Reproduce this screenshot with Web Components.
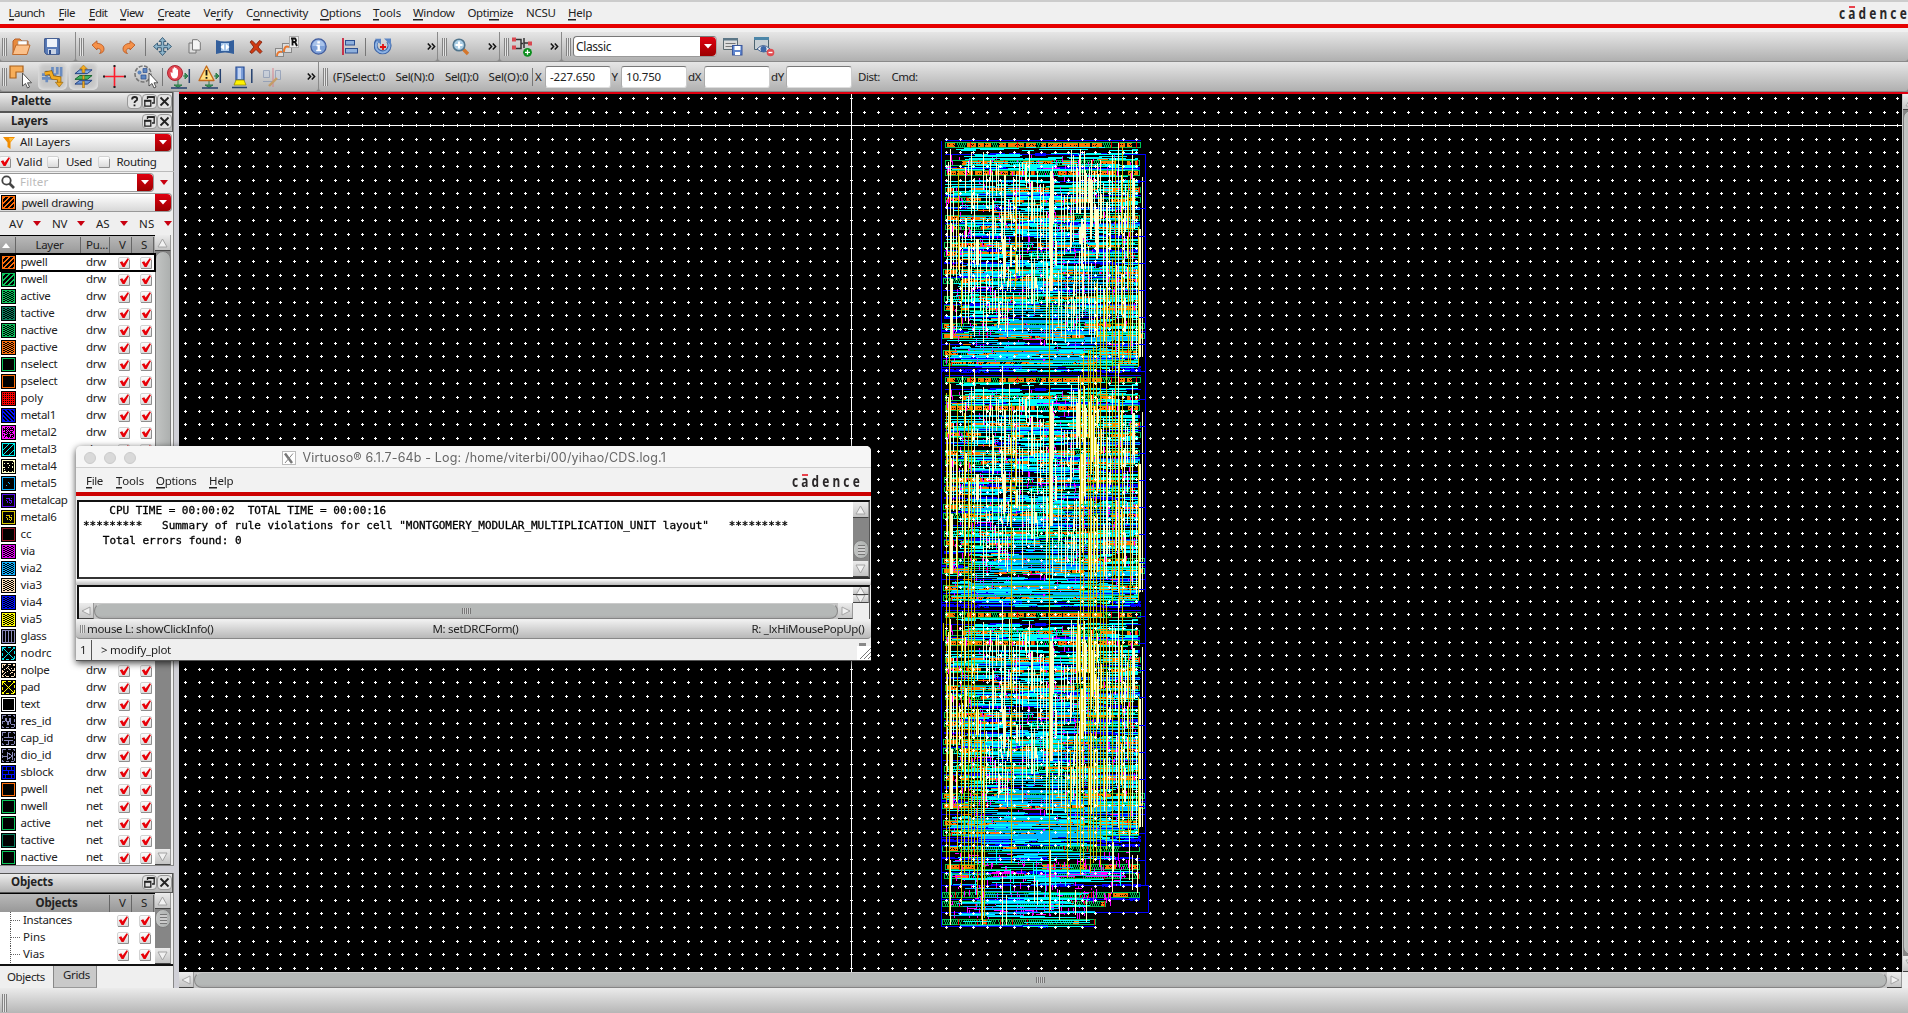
<!DOCTYPE html>
<html lang="en">
<head>
<meta charset="utf-8">
<title>Virtuoso Layout</title>
<style>
html,body{margin:0;padding:0;height:100%;overflow:hidden;background:#efefef}
body{font-family:"Noto Sans","Open Sans",sans-serif;font-size:11.5px;color:#222}
</style>
</head>
<body>
<app-shell></app-shell>
<script>
const define = (name, css, html, after) => customElements.define(name, class extends HTMLElement {
  connectedCallback() {
    if (this.shadowRoot) return;
    const r = this.attachShadow({mode: 'open'});
    r.innerHTML = `<style>*{box-sizing:border-box}${css}</style>` + (typeof html === 'function' ? html(this) : html);
    if (after) after(this, r);
  }
});

/* Text set to a given advance width; "_" before a letter marks its mnemonic. */
define('fit-text', `:host{display:block;flex:none;white-space:pre;line-height:16px;height:16px}
span{display:inline-block;white-space:pre}u{text-decoration:none;box-shadow:0 1.5px 0 #222;display:inline-block;line-height:13px}`,
  el => {
    const t = el.getAttribute('text');
    return `<span>${el.hasAttribute('mn') ? t.replace(/_(.)/, '<u>$1</u>') : t}</span>`;
  },
  (el, r) => {
    const s = r.querySelector('span'), w = +el.getAttribute('w');
    if (!w) return;
    el.style.width = w + 'px';
    const n = s.textContent.length, cur = s.getBoundingClientRect().width;
    s.style.letterSpacing = ((w - cur) / n).toFixed(3) + 'px';
  });
const T = (text, w, extra = '') => `<fit-text text='${text}' w="${w}" ${extra}></fit-text>`;

/* Children in a flex row, each spaced from the one before it. */
const row = (start, items) => {
  let cur = start;
  return items.map(([x, w, h]) => {
    const m = x - cur; cur = x + w;
    return `<div style="margin-left:${m}px;width:${w}px;flex:none;display:flex;align-items:center">${h}</div>`;
  }).join('');
};

define('cadence-logo', `:host{display:block;flex:none;width:72px;height:20px;color:#2b2829;position:relative;overflow:visible}
.t{transform:scaleX(.74);transform-origin:0 0;font:bold 16px/20px "Noto Sans",sans-serif;letter-spacing:4.3px;white-space:nowrap}
i{position:absolute;left:10px;top:3px;width:6px;height:2px;background:#e8414b}`,
  `<div class="t">cadence</div><i></i>`);

define('check-box', `:host{display:block;flex:none;width:12px;height:12px}svg{display:block;overflow:visible}`,
  el => `<svg width="12" height="12"><defs><linearGradient id="g" x2="0" y2="1"><stop stop-color="#fff"/><stop offset="1" stop-color="#d9d9d9"/></linearGradient></defs>
  <rect x=".5" y=".5" width="11" height="11" rx="1.5" fill="url(#g)" stroke="#d2d2d2"/><path d="M1 11.5h10.5V3" fill="none" stroke="#8e8e8e"/>
  ${el.hasAttribute('on') ? '<path d="M1.800 5.200L4.300 4.300L5.600 6.400L9.600 1.300L11 2L6.600 10H4.600z" fill="#e80008"/>' : ''}</svg>`);

define('drop-button', `:host{display:flex;flex:none;align-items:center;justify-content:center;background:linear-gradient(#e00010,#9c0000);border-radius:0 4px 4px 0}`,
  `<svg width="8" height="5"><path d="M0 0h8L4 4.5z" fill="#fff"/></svg>`);

define('scroll-button', `:host{display:flex;flex:none;align-items:center;justify-content:center;width:15px;height:16px;background:linear-gradient(#ececec,#c4c4c4);border-bottom:1px solid #444;border-right:1px solid #999}`,
  el => {
    const d = {up: 'M5.5 1L10 9H1z', down: 'M1 1H10L5.5 9z', left: 'M1 5L9 1V9z', right: 'M2 1L10 5L2 9z'}[el.getAttribute('dir')];
    return `<svg width="11" height="10"><path d="${d}" fill="#f1f1f1" stroke="#a4a4a4"/></svg>`;
  });

/* ---- icons ---- */
const I = {
open:['0 0 20 18','<path d="M2 16V3l2-2h5l2 2h6v4" fill="#e88a3c" stroke="#b5602a"/><path d="M7 3h9v6H7z" fill="#fff" stroke="#999" stroke-width=".6"/><path d="M1.5 16.5L5 7h14l-3 9.500z" fill="#fbc08a" stroke="#c06c2c"/>'],
save:['0 0 16 17','<path d="M.7.7h14.600v15.600H2.500L.7 14.500z" fill="#5a7cb8" stroke="#2d4a86"/><path d="M3 1h10v8H3z" fill="#eef3fa"/><path d="M4 11h8v5H4z" fill="#c9d3e4"/><path d="M5 12h2v4H5z" fill="#2d4a86"/>'],
undo:['0 0 14 14','<path d="M1 5L6 .8V3.300c5 .3 7 3 7 5.700 0 2.300-1.500 4-4.500 4.500 2-1.500 2.300-5-2.500-5.200V10z" fill="#f5914a" stroke="#b5531c" stroke-width=".8"/>'],
redo:['0 0 14 14','<g transform="matrix(-1 0 0 1 14 0)"><path d="M1 5L6 .8V3.300c5 .3 7 3 7 5.700 0 2.300-1.500 4-4.500 4.500 2-1.500 2.300-5-2.500-5.200V10z" fill="#f5914a" stroke="#b5531c" stroke-width=".8"/></g>'],
move:['0 0 19 19','<path d="M9.500.5L13 4.500H10.700V8.300H14.500V6L18.500 9.500L14.500 13V10.700H10.700V14.500H13L9.500 18.500L6 14.500H8.300V10.700H4.500V13L.5 9.500L4.500 6V8.300H8.300V4.500H6z" fill="#8fb6cc" stroke="#2f5570" stroke-width=".9"/>'],
copy:['0 0 13 15','<path d="M1 4h7v10H1z" fill="#ddd" stroke="#777"/><path d="M4.500.7h5L12.300 3.500V11H4.500z" fill="#f4f4f4" stroke="#777"/>'],
stretch:['0 0 18 14','<path d="M0 0Q9 3 18 0V14Q9 11 0 14z" fill="#335f9c"/><rect x="5" y="3" width="8" height="8" fill="#a9c8ea"/><path d="M8 4v6L4.500 7zM10 4v6l3.500-3z" fill="#fff"/>'],
del:['0 0 14 14','<path d="M1 2l2-1.500L7 4.500 10.500 .5 13 2 9 7l4 4.500-2 2L7 9.500 3 13.500.8 12 4.800 7z" fill="#cf3a12" stroke="#7a1b05" stroke-width=".8"/>'],
rep:['0 0 24 24','<rect x=".5" y="13.500" width="8" height="8" fill="#ddd" stroke="#888"/><rect x="7.500" y="8.500" width="9" height="9" fill="#ddd" stroke="#888"/><rect x="14.500" y="1.500" width="9" height="11" fill="#eee" stroke="#aaa"/><path d="M2 21q0-5 5-4M9 17q0-7 5-5" stroke="#e87830" stroke-width="2" fill="none"/><path d="M16 3.500h4q2 2 0 3.500l2 4M17.500 3.500v7M17 7h3" stroke="#111" stroke-width="1.800" fill="none"/>'],
info:['0 0 17 17','<circle cx="8.500" cy="8.500" r="7.600" fill="#7da0d8" stroke="#3d599c" stroke-width="1.200"/><path d="M2.500 8a6 6 0 0 1 12 0z" fill="#a9c3ea"/><path d="M7.300 3.200h2.600v2.200H7.300zM6.500 6.800h3.400v5h1.300v1.400H6.200v-1.400h1.300V8.200h-1z" fill="#fff"/>'],
align:['0 0 16 17','<path d="M1 0v17" stroke="#c8102c" stroke-width="1.600"/><rect x="3.500" y="2.500" width="9" height="4.500" fill="#8fb0dc" stroke="#2d4f90"/><rect x="3.500" y="10.500" width="12" height="4.500" fill="#8fb0dc" stroke="#2d4f90"/>'],
rot:['0 0 18 18','<path d="M3.500 2.500A7 7 0 1 0 14 3" fill="none" stroke="#3c64a6" stroke-width="4"/><path d="M3.800 3A6.800 6.800 0 1 0 14 3.500" fill="none" stroke="#8cb2e4" stroke-width="2"/><path d="M1 .8h6v6zM10 .5h7v7z" fill="#5c86c4"/><path d="M9 6v6M6 9h6" stroke="#e01010" stroke-width="1.800"/>'],
zoom:['0 0 18 18','<path d="M10.500 10.500L16 16" stroke="#d4762c" stroke-width="3.400"/><circle cx="7" cy="7" r="5.800" fill="#a9cde4" stroke="#50748c" stroke-width="1.600"/><path d="M7 3.500v7M3.500 7h7" stroke="#fff" stroke-width="2.200"/>'],
net:['0 0 20 20','<path d="M4 2.500h5v9H4M9 6.500h2M12 1v10M12 6h5" fill="none" stroke="#333" stroke-width="1.500"/><path d="M0 .5h4v4H0zM0 8.500h4v4H0zM16 4.500h4v4h-4z" fill="#d84850"/><circle cx="15.500" cy="15.300" r="4.400" fill="#0b8f1d"/><path d="M15.500 12.800v5M13 15.300h5" stroke="#fff" stroke-width="1.300"/>'],
ws:['0 0 20 18','<path d="M.5.5h14v11H.5z" fill="#ddd" stroke="#5c6a70"/><path d="M0 0h15v2.500H0z" fill="#5c7686"/><path d="M2.500 5.500h10M2.500 8.500h8" stroke="#777"/><rect x="9.500" y="7.500" width="9.500" height="9.500" fill="#5f86cf" stroke="#3b579c"/><path d="M11.500 8h6v4h-6zM12 14h5v3h-5z" fill="#fff"/>'],
wd:['0 0 21 20','<path d="M.5.5h14v12H.5z" fill="#c8d0d4" stroke="#4c6470"/><path d="M0 0h15v3H0z" fill="#4c86a8"/><path d="M3 12q6-7 13 0-6 6-13 0z" fill="#eee" stroke="#406090"/><circle cx="9.500" cy="12" r="3" fill="#3d68a8"/><circle cx="16.500" cy="15.500" r="3.800" fill="#e04c50"/><path d="M14.500 15.500h4" stroke="#fff" stroke-width="1.400"/>'],
ptr:['0 0 24 24','<path d="M1 1h13v6H7v6H1z" fill="#f7ae5a" stroke="#a8601c" stroke-width="1.200"/><path d="M13.500 8v13l3-2.500 2 4.500 2-1-2-4.200h4z" fill="#fff" stroke="#444" stroke-width=".9"/>'],
route:['0 0 24 24','<path d="M1 10h15M1 14h12M6 6v12M12 2v12M17 2v8M21 2v10" stroke="#6a8cc0" stroke-width="2.800"/><path d="M4 9l6-1 2 5 7 1v5" fill="none" stroke="#8a5a08" stroke-width="4.400"/><path d="M4 9l6-1 2 5 7 1v5" fill="none" stroke="#f2ab22" stroke-width="3"/><path d="M15 18h8l-4 5z" fill="#f2ab22" stroke="#8a5a08" stroke-width=".6"/>'],
layers:['0 0 20 24','<path d="M1 20l5-4h13l-5 4z" fill="#6a94d4" stroke="#1d3c80"/><path d="M1 15l5-4h13l-5 4z" fill="#45b664" stroke="#116028"/><path d="M1 9l5-4h13l-5 4z" fill="#83acdf" stroke="#1d3c80"/><path d="M8.500 8V4H6l4-4 4 4h-2.500v4zM9 11h2v4H9zM9 17h2v7H9z" fill="#f2ab22" stroke="#8a5a08" stroke-width=".5"/>'],
cross:['0 0 23 23','<path d="M11.500 1v21M1 11.500h21" stroke="#ff1d2c" stroke-width="1.600"/><path d="M11.500 0v2M11.500 21v2M0 11.500h2M21 11.500h2" stroke="#222" stroke-width="2"/>'],
circ:['0 0 24 24','<circle cx="9" cy="9" r="8" fill="none" stroke="#777" stroke-width="1.600" stroke-dasharray="4 1.500"/><path d="M9 3.500h4v4H9zM7 10h5v4H7z" fill="#5d86bf" stroke="#2d4f90" stroke-width=".7"/><circle cx="5.500" cy="7.500" r="2" fill="#5d86bf"/><path d="M15 8v13l3-2.500 2 4.500 2-1-2-4.200h4z" fill="#fff" stroke="#444" stroke-width=".9"/>'],
hand:['0 0 24 24','<path d="M11 15v5M7 20l4 2.500 4-2.500zM16 11h4M18 8l3 3-3 3z" fill="#3d9a60" stroke="#2c7a48"/><path d="M22.300 4v14M4 23h16" stroke="#24406e" stroke-width="1.500"/><circle cx="8" cy="8" r="7.500" fill="#e04550" stroke="#b02432"/><path d="M3.500 7l2 1V3.500h1.300V7V2.300h1.400V7V3h1.400v4.500V4.500h1.400V10q-.5 3.500-3.800 3.500-2 0-3.200-3z" fill="#fff"/>'],
warn:['0 0 24 24','<path d="M11 15v5M7 20l4 2.500 4-2.500zM16 11h4M18 8l3 3-3 3z" fill="#3d9a60" stroke="#2c7a48"/><path d="M22.300 4v14M4 23h16" stroke="#24406e" stroke-width="1.500"/><path d="M8.500 1L16 15.500H1z" fill="#ffe080" stroke="#c46a1c" stroke-width="1.300" stroke-linejoin="round"/><path d="M8.500 5v5.500M8.500 12v1.800" stroke="#111" stroke-width="1.800"/>'],
tube:['0 0 24 24','<path d="M5 2h8v13H5z" fill="#7d9fd8" stroke="#244a94" stroke-width="1.200"/><path d="M7 3h3v11H7z" fill="#c4d5f2"/><path d="M5 15h8l2 5H3z" fill="#fff200" stroke="#8a8400" stroke-width=".7"/><path d="M1 22.500h15M20.800 4v14" stroke="#24406e" stroke-width="1.500"/>'],
ghost:['0 0 20 20','<g opacity=".6"><path d="M11 1v19" stroke="#d87c88" stroke-width="1.500"/><path d="M1.500 3.500h6v7h-6zM13.500 3.500h5v9h-5zM1 14.500h9" fill="#c3cddd" stroke="#7a8cae"/><path d="M7 19l8-8" stroke="#c8862c" stroke-width="2.400"/></g>'],
more:['0 0 9 9','<path d="M.8 1.500l2.800 3-2.800 3M4.800 1.500l2.800 3-2.800 3" fill="none" stroke="#111" stroke-width="1.500"/>'],
funnel:['0 0 12 12','<path d="M0 0h12L7.500 5.500V12L4.500 10V5.500z" fill="#f08c00"/><path d="M6 1h5L7 5z" fill="#ffc040"/>'],
mag:['0 0 14 14','<circle cx="5.500" cy="5.500" r="4.200" fill="none" stroke="#444" stroke-width="1.800"/><path d="M8.500 8.500L13 13" stroke="#444" stroke-width="2.600"/>'],
help:['0 0 13 13','<path d="M4 4.500q.3-2.500 2.600-2.500 2.600 0 2.600 2 0 1.300-1.500 2Q6.500 6.700 6.500 8M6.500 9.500v1.800" fill="none" stroke="#222" stroke-width="1.800"/>'],
rest:['0 0 13 13','<path d="M4.500 4V1.800h6.700V8H9M1.800 5.500h6v5.700h-6z" fill="none" stroke="#222" stroke-width="1.300"/><path d="M1.500 5.800h6.500M4.500 2.200h7" stroke="#222" stroke-width="1.800"/>'],
close:['0 0 13 13','<path d="M2.500 2.500l8 8M10.500 2.500l-8 8" stroke="#222" stroke-width="1.800"/>']
};
const icon = (n, w, h) => `<svg width="${w}" height="${h}" viewBox="${I[n][0]}" style="display:block;flex:none">${I[n][1]}</svg>`;
const grip = `<tool-grip></tool-grip>`, sep = `<tool-sep></tool-sep>`;
define('tool-grip', `:host{display:block;width:5px;height:18px;background:repeating-linear-gradient(90deg,#848484 0 1px,#e4e4e4 1px 2px)}`, '');
define('tool-sep', `:host{display:block;width:1px;height:18px;background:#777}`, '');

define('tool-bar', `:host{display:flex;flex:none;height:30px;background:#8a8a8a;gap:1px}
.s{display:flex;align-items:center;flex:none;background:linear-gradient(#e6e6e6,#b0b0b0);border-radius:0 0 3px 3px;height:29px}
.on{background:#c6c6c6;border-radius:5px;box-shadow:inset 0 0 5px #efefef;width:29px;height:27px;display:flex;align-items:center;justify-content:center}
.combo{display:flex;width:144px;height:21px;background:#fff;border:1px solid #777;border-color:#777 #aaa #999 #777;border-radius:4px;color:#222}
.combo fit-text{flex:1;padding-left:2px;font-size:12px;line-height:19px}
.in{width:66px;height:22px;background:#fff;border:1px solid #888;border-color:#777 #ccc #ddd #aaa;border-radius:3px;padding:2px 0 0 4px}`,
 el => {
  const seg = (x, w, items) => `<div class="s" style="width:${w}px">${row(x, items)}</div>`;
  if (el.getAttribute('kind') === 'edit') return [
    seg(0, 75, [[2,6,grip],[11,20,icon('open',20,18)],[44,16,icon('save',16,17)]]),
    seg(76, 361, [[79,6,grip],[91,14,icon('undo',14,14)],[122,14,icon('redo',14,14)],[145,1,sep],[153,19,icon('move',19,19)],[188,13,icon('copy',13,15)],[216,18,icon('stretch',18,14)],[249,14,icon('del',14,14)],[275,24,icon('rep',24,24)],[309.5,17,icon('info',17,17)],[342,16,icon('align',16,17)],[365,1,sep],[374,18,icon('rot',18,18)],[427,9,icon('more',9,9)]]),
    seg(438, 61, [[442,6,grip],[452,18,icon('zoom',18,18)],[488,9,icon('more',9,9)]]),
    seg(500, 61, [[504,6,grip],[512,20,icon('net',20,20)],[550,9,icon('more',9,9)]]),
    seg(562, 1346, [[566,6,grip],[573,144,`<div class="combo">${T('Classic',35)}<drop-button style="width:16px"></drop-button></div>`],[723,20,icon('ws',20,18)],[754,21,icon('wd',21,20)]])
  ].join('');
  const inp = t => `<div class="in">${t}</div>`;
  return [
    seg(0, 318, [[2,6,grip],[9,24,icon('ptr',24,24)],[38,29,`<div class="on">${icon('route',23,23)}</div>`],[69,29,`<div class="on">${icon('layers',19,23)}</div>`],[102.500,23,icon('cross',23,23)],[133.500,24,icon('circ',24,24)],[162,1,sep],[167,24,icon('hand',24,24)],[198,24,icon('warn',24,24)],[231,24,icon('tube',24,24)],[262,20,icon('ghost',20,20)],[307,9,icon('more',9,9)]]),
    seg(319, 1589, [[323,6,grip],[333,52,T('(F)Select:0',52)],[395.500,38.500,T('Sel(N):0',38.5)],[445,33.500,T('Sel(I):0',33.5)],[488.500,40,T('Sel(O):0',40)],[532,1,sep],[535,7,T('X',7)],[545,66,inp(T('-227.650',45))],[611.500,6,T('Y',6)],[621,66,inp(T('10.750',35))],[688,13,T('dX',13)],[704,66,inp('')],[771,13,T('dY',13)],[786,66,inp('')],[858,22,T('Dist:',22)],[891.500,26,T('Cmd:',26)]])
  ].join('');
 });

define('menu-bar', `:host{display:flex;flex:none;align-items:center;overflow:hidden}`,
 el => row(0, JSON.parse(el.getAttribute('items')).map(([x,w,t]) => [x,w,T(t,w,'mn')])) + '<slot></slot>');

/* ---- layer palette ---- */
const noise = (x, y) => { const v = Math.sin(x * 12.9898 + y * 78.233) * 43758.5453; return v - Math.floor(v); };
const swatch = (c, k) => {
  let b = '', bord = c;
  const px = (f, col = '#000') => { let d=''; for(let y=0;y<11;y++)for(let x=0;x<11;x++) if(f(x,y)) d+=`M${x+2} ${y+2}h1v1h-1z`; return `<path d="${d}" fill="${col}"/>`; };
  const fill = `<rect x="2" y="2" width="11" height="11" fill="${c}"/>`;
  if (k==='hatch') b = px((x,y)=>(x+y)%5<2, c);
  if (k==='bhatch') b = px((x,y)=>(x-y+22)%4<2, c);
  if (k==='chk') b = fill + px((x,y)=>x%2===0&&(x+2*y)%4===0||x%2===1&&(x+2*y)%4===1);
  if (k==='fine') b = fill + px((x,y)=>(x+y)%2===0&&y%2===0);
  if (k==='dot') b = px((x,y)=>x%3!==2&&y%3!==2&&(x+y)%2===0||noise(x,y)>.8, c);
  if (k==='spk') b = px((x,y)=>noise(x,y)>.82, c);
  if (k==='few') b = px((x,y)=>x%4===1&&y%4===2||noise(x,y)>.94, c);
  if (k==='two') b = px((x,y)=>x===5&&y===4||x===6&&y===5||x===3&&y===7, c);
  if (k==='mid') b = px((x,y)=>x>2&&x<9&&y>2&&y<9&&noise(x,y)>.6, c);
  if (k==='diag') b = `<path d="M2 13L13 2M2 8l6-6M8 13l5-5" stroke="${c}"/>`;
  if (k==='bars') b = `<path d="M4.500 2v11M7.500 2v11M10.500 2v11" stroke="${c}"/>`;
  if (k==='x') b = `<path d="M2 2l11 11M13 2L2 13" stroke="${c}" stroke-width="1.200"/>`;
  if (k==='brick') b = `<path d="M2 5.500h11M2 9.500h11M5.500 2v3M10.500 2v3M7.500 6v3M4.500 10v3M10.500 10v3" stroke="${c}" stroke-width="1.500"/>`;
  if (k==='res') b = `<path d="M2 7h2l1-3 2 7 2-7 1 6h3" fill="none" stroke="${c}"/>`;
  if (k==='cap') b = `<path d="M7.500 2v4M3 6.500h9M3 9.500h9M7.500 10v3" stroke="${c}"/>`;
  if (k==='dio') b = `<path d="M2 8h4M6 4v8l5-4zM11.500 4v8" fill="none" stroke="${c}"/>`;
  const dash = /^(spk|x|res|cap|dio)$/.test(k) ? 'stroke-dasharray="3 2"' : '';
  return `<svg width="15" height="15" shape-rendering="crispEdges" style="display:block"><rect width="15" height="15" fill="#000"/>${b}<rect x="1.500" y="1.500" width="12" height="12" fill="none" stroke="${bord}" ${dash}/></svg>`;
};
const O='#ff6f0c',G='#0cc45c',DG='#0a8060';
const LAYERS=[['pwell',O,'hatch',27],['nwell',G,'hatch',27],['active',G,'chk',30],['tactive',DG,'chk',34],['nactive',G,'chk',37],['pactive',O,'chk',37],['nselect',G,'',37],['pselect',O,'',37],['poly','#f80000','fine',22.5],['metal1','#0010ff','bhatch',35.5],['metal2','#ff10ff','dot',36],['metal3','#00f0f0','diag',36],['metal4','#ffffc8','few',36],['metal5','#10b0ff','two',36],['metalcap','#5a10f0','mid',47],['metal6','#d8c800','mid',36],['cc','#981828','',11],['via','#e000f0','chk',14.5],['via2','#10b0ff','chk',21.5],['via3','#ffe0b8','chk',21.5],['via4','#0010ff','chk',21.5],['via5','#ffff00','chk',21.5],['glass','#8888b8','bars',26],['nodrc','#00e8f0','x',31],['nolpe','#ffe0b8','spk',29],['pad','#ffff00','x',19.5],['text','#ffffff','',19.5],['res_id','#8888b8','res',31],['cap_id','#8888b8','cap',32.5],['dio_id','#8888b8','dio',31],['sblock','#0010ff','brick',33]];
for (const [n,c,w] of [['pwell',O,27],['nwell',G,27],['active',G,30],['tactive',DG,34],['nactive',G,37]]) LAYERS.push([n,c,'net',w]);

define('layer-row', `:host{display:flex;flex:none;height:17px;width:155px;align-items:center;background:#fff}
:host([sel]){outline:2px solid #000;outline-offset:-1px;position:relative}
.sw{width:20.5px;padding-left:1px}.n{width:65.5px}.p{width:32px}fit-text{margin-top:-1px}check-box+check-box{margin-left:10px}`,
 el => { const [n,c,k,w]=LAYERS[+el.getAttribute('i')], net=k==='net';
  return `<div class="sw">${swatch(c,net?'':k)}</div><div class="n">${T(n,w)}</div><div class="p">${T(net?'net':'drw',net?16.5:20)}</div><check-box on></check-box><check-box on></check-box>`; });

define('dock-title', `:host{display:flex;flex:none;height:20px;width:173px;align-items:center;font-weight:bold;background:linear-gradient(#ececec,#b2b2b2);border:1px solid #555;border-width:1px 1px 1px 0;padding:0 1px 2px 11px;justify-content:space-between}
div{display:flex;gap:2px}b{display:flex;width:13px;height:13px;border-radius:3px;outline:1px solid #999;background:#e2e2e2}`,
 el => T(el.getAttribute('text'), el.getAttribute('w')) + `<div>${el.getAttribute('btn').split(' ').map(n=>`<b>${icon(n,13,13)}</b>`).join('')}</div>`);

define('combo-box', `:host{display:flex;flex:none;align-items:center;width:172px;border:1px solid #999;border-radius:0 4px 4px 0;border-left:0;background:linear-gradient(#fff,#d8d8d8)}
:host([edit]){background:#fff}slot{display:flex;align-items:center;flex:1}drop-button{align-self:stretch;width:16px}`, `<slot></slot><drop-button></drop-button>`);

define('v-scroll', `:host{display:flex;flex-direction:column;flex:none;width:16px;background:#868686;overflow:hidden}
.th{background:linear-gradient(90deg,#c2c4c3,#adb0af);border:1px solid #7e7e7e;border-radius:8px;flex:none;display:flex;align-items:center;justify-content:center}
.m{width:7px;height:10px;background:repeating-linear-gradient(#777 0 1px,#ccc 1px 3px)}.f{flex:1}`,
 el => `<scroll-button dir="up" style="width:16px"></scroll-button><div style="height:${el.getAttribute('at')||0}px;flex:none"></div><div class="th" style="height:${el.getAttribute('size')}px">${el.hasAttribute('mark')?'<div class="m"></div>':''}</div><div class="f"></div><scroll-button dir="down" style="width:16px"></scroll-button>`);
define('h-scroll', `:host{display:flex;flex:none;height:16px;background:#c4c4c4}
.th{flex:1;background:linear-gradient(#b5b8b7 80%,#aaa);border:1px solid #858585;border-radius:8px;border-top-color:#cacaca;display:flex;align-items:center;justify-content:center}
.m{width:9px;height:6px;background:repeating-linear-gradient(90deg,#777 0 1px,#ccc 1px 2px)}`,
 `<scroll-button dir="left" style="height:16px"></scroll-button><div class="th"><div class="m"></div></div><scroll-button dir="right" style="height:16px"></scroll-button>`);

define('layer-palette', `:host{display:flex;flex-direction:column;flex:none;width:179px;height:896px;background:#efefef;border-right:5px solid #d0d0d7;box-shadow:inset -1px 0 #888}
.line{display:flex;flex:none;align-items:center}
.hd{display:flex;height:19px;width:155px;align-items:center;background:linear-gradient(#b9b9b9,#989898);border-top:1px solid #000;flex:none}
.hd>div{height:15px}.tb{display:flex;flex:none}.rows{width:155px;background:#fff}
.red{width:0;height:0;border:4px solid transparent;border-top:5px solid #c80010;border-bottom:0}
.vl{width:1px;height:17px;background:#666}
.tree{display:flex;width:155px;height:17px;align-items:center;background:#fff}.tree fit-text{margin-top:-2px}
.tree i{width:10px;height:17px;margin-left:10px;border-left:1px dotted #555;background:linear-gradient(90deg,#666 50%,#fff0 50%) 0 8px/2px 1px repeat-x;margin-right:3px}
.tabs{display:flex;height:24px;flex:none;border-top:2px solid #111;width:173px}
.tabs div{padding:3px 0 0 7px;width:54px;border-right:1px solid #888}.tabs div+div{width:43px;background:#c9c9c9;border-bottom:1px solid #999;padding:1px 0 0 9px}`,
 () => `<dock-title text="Palette" w="40" btn="help rest close"></dock-title><dock-title text="Layers" w="37" btn="rest close"></dock-title>
 <combo-box style="height:19px;margin-top:1px">${row(0,[[3,12,icon('funnel',12,12)],[20,50,`<div style="margin-top:-1px">${T('All Layers',50)}</div>`]])}</combo-box>
 <div class="line" style="height:20px;border-bottom:1px solid #bbb">${row(0,[[-1,12,'<check-box on></check-box>'],[16.5,26,T('Valid',26)],[47,12,'<check-box></check-box>'],[66,26,T('Used',26)],[98,12,'<check-box></check-box>'],[116.5,40,T('Routing',40)]])}</div>
 <div class="line" style="height:20px"><combo-box edit style="width:154px;height:19px;color:#bbb">${row(0,[[1,14,icon('mag',14,14)],[20,28.5,T('Filter',28.5)]])}</combo-box><div class="red" style="margin-left:6px"></div></div>
 <combo-box style="height:19px;margin-top:1px">${row(0,[[1,17,swatch(O,'hatch')],[21.5,72,T('pwell drawing',72)]])}</combo-box>
 <div class="line" style="height:23px">${row(0,[[9,14.5,T('AV',14.5)],[33,8,'<div class="red"></div>'],[52,15,T('NV',15)],[77,8,'<div class="red"></div>'],[96,13.5,T('AS',13.5)],[120,8,'<div class="red"></div>'],[139,15.5,T('NS',15.5)],[164,8,'<div class="red"></div>']])}</div>
 <div class="tb" style="height:631px;overflow:hidden;border-bottom:1px solid #888"><div class="rows"><div class="hd">${row(0,[[2,8,'<svg width="8" height="5"><path d="M0 5h8L4 0z" fill="#fff"/></svg>'],[15,1,'<div class="vl"></div>'],[35.5,28,T('Layer',28)],[80,1,'<div class="vl"></div>'],[86,22,T('Pu...',22)],[109,1,'<div class="vl"></div>'],[119,7.5,T('V',7.5)],[131,1,'<div class="vl"></div>'],[141,6.500,T('S',6.5)],[153,1,'<div class="vl"></div>']])}</div>
 ${LAYERS.map((_,i)=>`<layer-row i="${i}" ${i?'':'sel'}></layer-row>`).join('')}</div><v-scroll size="330"></v-scroll></div>
 <div style="height:7px;background:#d0d0d7;flex:none"></div>
 <dock-title text="Objects" w="42" btn="rest close"></dock-title>
 <div class="tb" style="height:71px;overflow:hidden"><div class="rows"><div class="hd">${row(0,[[35.500,42,`<b style="display:block">${T('Objects',42)}</b>`],[109,1,'<div class="vl"></div>'],[119,7.5,T('V',7.5)],[131,1,'<div class="vl"></div>'],[141,6.500,T('S',6.5)],[153,1,'<div class="vl"></div>']])}</div>
 ${[['Instances',49],['Pins',22.5],['Vias',21.5]].map(([t,w])=>`<div class="tree"><i></i><div style="width:94px">${T(t,w)}</div><check-box on></check-box><check-box on style="margin-left:10px"></check-box></div>`).join('')}</div><v-scroll at="0" size="19" mark></v-scroll></div>
 <div class="tabs"><div>${T('Objects',38)}</div><div>${T('Grids',27)}</div></div>`);

/* ---- layout drawing area ---- */
function drawLayout(cv) {
  const g = cv.getContext('2d'); g.translate(-179, -94);
  const R = (c,x,y,w,h)=>{g.fillStyle=c;g.fillRect(Math.round(x),Math.round(y),Math.round(w),Math.round(h))};
  R('#000',179,94,1723,878);
  R('#fff',851,94,1,878); R('#fff',179,125,1723,1);
  let s = 1; const rnd=()=>{s=(s+0x6D2B79F5)|0;let t=Math.imul(s^s>>>15,1|s);t=t+Math.imul(t^t>>>7,61|t)^t;return((t^t>>>14)>>>0)/4294967296};
  const ri=(a,b)=>a+Math.floor(rnd()*(b-a+1));
  const BL='#0000ff',GR='#00c455',OR='#ff7800',RD='#f80000',CY='#00ffff',LB='#00b4ff',CR='#ffffc8',MG='#ff00ff',YE='#d8c400';
  function band(y,x0,x1,plain){
    y=Math.round(y)-3; R('#000',x0,y,x1-x0,6); R(GR,x0,y,x1-x0,1); R(GR,x0,y+5,x1-x0,1); R(GR,x0,y,1,6); R(GR,x1-1,y,1,6);
    for(let x=x0+2;x<x1-4;){
      const w=Math.min(ri(2,16),x1-2-x), k=rnd();
      if(k<(plain?.15:.65)){R(OR,x,y+1,w,4);for(let i=0;i<w;i++)if(rnd()<.35)R('#000',x+i,y+2+(i&1),1,1)}
      else if(k<.87){for(let i=0;i<w;i++)R(GR,x+i,y+1+(i&1)*2,1,2)}
      if(rnd()<.25)R(RD,x+w,y,1,6);
      x+=w+ri(1,2);
    }
  }
  function rail(y,x0,x1){y=Math.round(y);R(BL,x0,y,x1-x0,1);for(let x=x0;x<x1;){const w=ri(4,24);if(rnd()<.55)R(BL,x,y-1,Math.min(w,x1-x),ri(2,3));for(let i=0;i<w;i+=2)if(rnd()<.25)R('#000',x+i,y+1,1,1);x+=w+ri(0,5)}}
  function block(T,n){
    s=77;
    band(T+6,945,1141); R(BL,945,T+1,196,1); rail(T+15,945,1141);
    for(let i=0;i<8;i++){
      const y=T+24.3+27.17*i,l=[945,945,945,944,943,944,942,943][i],r=[1140,1141,1140,1139,1141,1140,1145,1139][i];
      band(y,l,r);band(y+9.3,l,r);rail(y+5,l,r);rail(y+18,l,r);
    }
    rail(T+228,941,1141); rail(T+231,941,1141);
    for(let i=0;i<430;i++)R(MG,ri(946,1136),T+14+ri(0,205),1,ri(2,8));
    for(let y=T+2;y<T+233;y+=1){
      const d=y<T+9?.3:y<T+14?.8:1.02; if(rnd()>.68*d)continue;
      for(let x=ri(945,975);x<1136;){const w=ri(5,60);if(rnd()<.57)R(CY,x,y,Math.min(w,1138-x),1);x+=w+ri(1,9)}
    }
    for(let i=0;i<115;i++){const y=T+20+Math.floor(Math.pow(rnd(),.62)*207),x=ri(948,1090);R(LB,x,y,Math.min(ri(20,110),1140-x),1)}
    for(let i=0;i<30;i++){const x=ri(947,1120);R(rnd()<.4?MG:OR,x,T+20+ri(0,190),ri(5,20),1)}
    for(let x=947;x<1135;x+=3){
      const z=(x-920)*3, dense=(z>455&&z<560)?3.4:(z>150&&z<275)?2.3:(z>300&&z<460)?1.7:(z>560)?2.1:1.5;
      const k=Math.round(dense*1.6+rnd()*1.5);
      for(let j=0;j<k;j++){const y=T+10+ri(0,155),h=ri(10,62);R(CR,x+(rnd()<.15?1:0),y,rnd()<.07?2:1,Math.min(h,T+205-y))}
    }
    for(const [x,a,w,h] of [[1050,32,2,60],[1050,92,3,60],[976,100,3,26],[1004,36,2,50],[1003,100,2,40],[1084,12,1,110],[1080,10,1,60],[1081,80,2,50],[1090,40,2,60],[1096,70,2,50],[1106,110,2,70],[1118,4,1,215],[1138,90,3,128],[1142,38,1,180],[1136,130,1,90],[1132,11,1,200],[950,10,1,190],[951,140,2,60]])R(CR,x,T+a,w,h);
    if(n)for(const [x,a,h] of [[974,-5,60],[1002,-8,50],[962,2,40],[1009,10,40],[1078,2,60],[1083,-6,60],[1118,-10,40]])R(CR,x,T+a,1,h);
    for(let i=0;i<9;i++)R(i%3?LB:CY,947+ri(0,60),T+207+i*3,ri(60,120),1);
  }
  for(let n=0;n<3;n++){const T=139+n*235;block(T,n)}
  R('#000',935,850,215,100);
  R(BL,941,141,1,786);R(BL,1145,154,1,732);for(let y=154;y<880;y+=27.17)R(BL,1138,y,8,1);
  R(BL,1124,154,22,1);R(BL,1138,885,11,1);R(BL,1148,885,1,28);R(BL,1040,912,108,1);
  s=991;
  band(849,942,1140,1);band(867,945,1140);band(876,944,1140,1);band(895,942,1140,1);band(904,942,1106,1);band(922,942,1096,1);
  for(const [y,r] of [[845,1140],[858,1140],[872,1140],[885,1141],[899,1140],[912,1106],[926,1096]])rail(y,941,r);
  for(let i=0;i<240;i++){const y=ri(851,914),wide=rnd()<.2;R(MG,ri(946,y>898?1090:1128),y,wide?ri(3,10):1,wide?1:ri(2,8))}
  for(let i=0;i<22;i++)R(MG,ri(946,1110),ri(872,876),ri(8,25),1);
  for(let i=0;i<14;i++)R(LB,ri(948,1040),ri(832,846),ri(40,95),1);
  for(let i=0;i<75;i++){const y=ri(840,926),m=y>915?1090:y>905?1095:1132,x=ri(948,1060);R(rnd()<.6?CY:LB,x,y,Math.min(ri(15,110),m-x),1)}
  for(let y=888;y<918;y+=3)R(LB,ri(955,985),y,ri(30,80),1);
  for(const [x,y,h] of [[950,860,65],[961,835,70],[982,845,80],[1050,850,60],[1112,842,50],[1113,842,30],[1137,855,38],[1132,855,35],[1034,876,26],[1037,880,25],[1002,876,50],[1006,895,30],[1059,890,30],[1075,890,25],[1086,900,22],[1129,830,50]])R(CR,x,y,1,h);
  for(let i=0;i<16;i++)R(CY,ri(946,1136),ri(842,885),1,ri(8,20));
  /* top metal: x, y from, y to */
  for(const [x,a,b] of [[958,170,270],[961,280,327],[949,343,916],[1015,197,287],[1049,303,912],[1080,375,875],[1083,353,870],[1088,350,840],[1090,350,873],[1093,347,863],[1096,283,860],[1100,317,867],[1103,300,353],[1106,287,500],[1109,220,330],[1112,258,372],[1115,160,580],[1119,330,373],[1122,147,363],[1128,180,363],[1130,173,363],[1138,227,367],
   [946,393,861],[957,403,850],[964,413,873],[968,420,868],[971,400,866],[974,503,873],[977,700,898],[981,740,920],[984,716,918],[961,640,900],[1011,403,863],[1015,430,507],[1112,410,606],[1119,400,608],[1122,393,640],[1130,423,600],[1138,463,600],[1112,645,843],[1119,640,842],[1122,630,830],[1128,650,835],[1130,660,835],[1138,697,835],[1067,780,878],[1070,750,848],[1077,620,845],[1103,560,800],[1106,600,850],[943,623,641]])R(YE,x,a,1,b-a);
  for(let i=-49;i<=77;i++)for(let j=-2;j<=62;j++){const x=Math.round(850.9+13.588*i),y=Math.round(125.25+13.588*j);if(x<180||x>1901)continue;R('#fff',x-1,y,3,1);R('#fff',x,y-1,1,3)}
}
define('layout-view', `:host{display:flex;flex:none;flex-direction:column;width:1729px;height:896px;background:#efefef}
.top{display:flex;height:880px}.l{border-top:2px solid #e00010;width:1723px;height:880px}canvas{display:block}
.r{width:6px;overflow:hidden;padding-left:1px;background:#c8c8c8;border-top:2px solid #e00010;display:flex}`,
 `<div class="top"><div class="l"><canvas width="1723" height="878"></canvas></div><div class="r"><v-scroll size="845"></v-scroll></div></div><h-scroll style="width:1723px"></h-scroll>`,
 (el, r) => drawLayout(r.querySelector('canvas')));

/* ---- log window ---- */
define('log-window', `:host{display:flex;flex-direction:column;position:absolute;left:76px;top:446px;width:795px;height:215px;background:#efefef;border-radius:5px 5px 0 0;box-shadow:0 2px 7px rgba(0,0,0,.75);overflow:hidden}
.ti{display:flex;align-items:center;height:22px;flex:none;background:#f6f6f6;border-bottom:1px solid #d0d0d0;color:#666;font-family:Inter,Roboto,sans-serif;font-size:12.5px;padding-top:2px}
.c{width:12px;height:12px;border-radius:6px;background:#d9d9d9;border:1px solid #cbcbcb}
menu-bar{height:24px;background:#f2f2f2;padding-top:2px}.rd{height:4px;background:#cc0000;margin-bottom:4px;flex:none}
.box{display:flex;flex:none;border:2px solid #111;border-color:#111 #555 #333 #111;border-right-width:1px;background:#fff;margin:0 1px}
.log{flex:1;font:11px/15px "DejaVu Sans Mono",monospace;color:#000;padding:1px 0 0 4px;overflow:hidden}
.log fit-text{height:15px;line-height:15px;-webkit-text-stroke:.3px #000}
.st{display:flex;align-items:center;height:19px;flex:none;background:linear-gradient(#f0f0f0,#b8b8b8);border-bottom:1px solid #888;border-radius:4px}
.bt{display:flex;flex:1;align-items:center;border-bottom:1px solid #555}.g{width:5px;height:8px;background:repeating-linear-gradient(90deg,#888 0 1px,#e4e4e4 1px 2px)}`,
 () => `<div class="ti">${row(76,[[84,12,'<div class="c"></div>'],[104,12,'<div class="c"></div>'],[124,12,'<div class="c"></div>'],[282,14,'<svg width="14" height="14"><rect x=".5" y=".5" width="13" height="13" fill="#fff" stroke="#bbb"/><path d="M3 2.500l7 9.500" stroke="#777" stroke-width="2.500"/><path d="M11 2.500L3 12" stroke="#888"/></svg>'],[302.500,363.500,T('Virtuoso® 6.1.7-64b - Log: /home/viterbi/00/yihao/CDS.log.1',363.5)]])}</div>
 <menu-bar items='[[10,17,"_File"],[40,28,"_Tools"],[80,40.5,"_Options"],[133,24.5,"_Help"]]'><cadence-logo style="margin-left:558px;margin-top:0"></cadence-logo></menu-bar><div class="rd"></div>
 <div class="box" style="height:79px"><div class="log">${T('    CPU TIME = 00:00:02  TOTAL TIME = 00:00:16',303)}${T('*********   Summary of rule violations for cell "MONTGOMERY_MODULAR_MULTIPLICATION_UNIT layout"   *********',705)}${T('   Total errors found: 0',158.5)}</div><v-scroll at="22" size="19" mark></v-scroll></div>
 <div style="height:6px;flex:none;background:linear-gradient(#fff,#bbb)"></div>
 <div class="box" style="height:34px;border-bottom:0;margin-bottom:1px"><div style="flex:1;display:flex;flex-direction:column;justify-content:flex-end"><h-scroll></h-scroll></div><div style="width:16px;background:#efefef;flex:none"><scroll-button dir="up" style="width:16px;height:8px;overflow:hidden"></scroll-button><scroll-button dir="down" style="width:16px;height:8px;overflow:hidden"></scroll-button></div></div>
 <div class="st">${row(76,[[80,5,'<div class="g"></div>'],[87,126.500,T('mouse L: showClickInfo()',126.5)],[432.500,86,T('M: setDRCForm()',86)],[751.500,113,T('R: _lxHiMousePopUp()',113)]])}</div>
 <div class="bt">${row(76,[[80,6,T('1',6)],[91,1,'<tool-sep style="background:#555;height:20px"></tool-sep>'],[101,70,T('&gt; modify_plot',70)],[857,14,'<svg width="14" height="20"><rect y="6" width="14" height="14" fill="#fff"/><path d="M3 19L14 8M7 19l7-7M11 19l3-3" stroke="#777"/><path d="M2 3h7v3H2z" fill="#888"/></svg>']])}</div>`);

define('app-shell', `:host{display:flex;flex-direction:column;width:1908px;height:1013px;overflow:hidden;position:relative;background:#efefef}
.mb{height:24px;border-top:2px solid #ccc;background:#f0f0f0}.rd{height:4px;background:#e60000;flex:none}.gap{height:4px;flex:none;background:#f0f0f0}
.main{display:flex;flex:none;height:896px}.sb{flex:1;background:linear-gradient(#ebebeb,#b6b6b6);padding:6px 0 0 2px}`,
 `<menu-bar class="mb" items='[[8.5,36,"_Launch"],[58.5,16.5,"_File"],[89,18.5,"_Edit"],[120,23.5,"_View"],[157.5,32.5,"_Create"],[203.5,29.5,"Ve_rify"],[246,62,"C_onnectivity"],[320,41,"_Options"],[373,28,"_Tools"],[413,41.5,"_Window"],[467.5,45.5,"Opti_mize"],[526,29.5,"NCSU"],[568,24,"_Help"]]'><cadence-logo style="margin-left:1247px"></cadence-logo></menu-bar>
 <div class="rd"></div><div class="gap"></div>
 <tool-bar kind="edit"></tool-bar><tool-bar kind="select"></tool-bar>
 <div class="main"><layer-palette></layer-palette><layout-view></layout-view></div>
 <div class="sb"><tool-grip></tool-grip></div>
 <log-window></log-window>`);
</script>
</body>
</html>
